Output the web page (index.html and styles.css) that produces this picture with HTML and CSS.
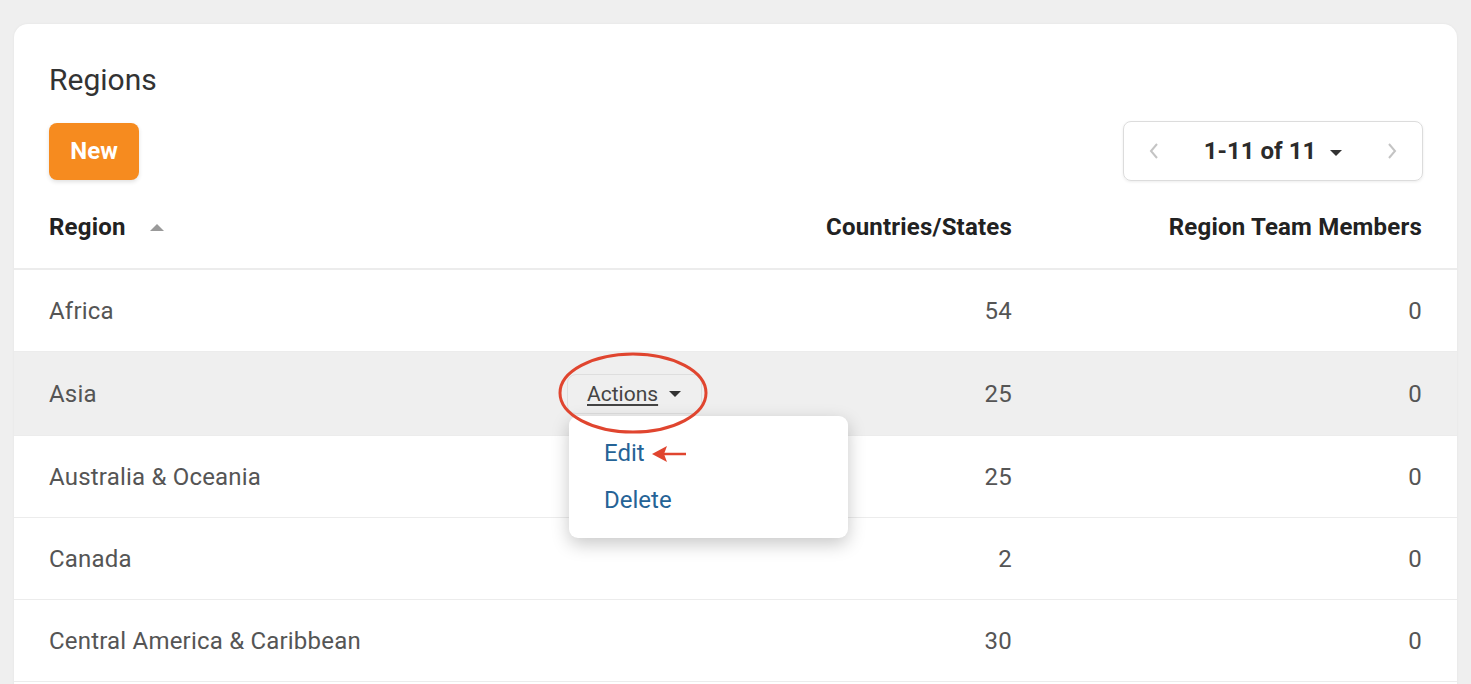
FILE: index.html
```html
<!DOCTYPE html>
<html><head>
  <meta charset="utf-8">
  <title>Regions</title>
  <link rel="stylesheet" href="styles.css">
</head>
<body>

<div class="card">
  <div class="head">
    <h1>Regions</h1>
    <div class="toolbar">
      <button class="btn-new">New</button>
      <div class="pager">
        <svg class="chev" width="14" height="20" viewBox="0 0 14 20"><path d="M10 3 L4 10 L10 17" fill="none" stroke="#c4c4c4" stroke-width="2"/></svg>
        <span class="range">1-11 of 11 <i class="caret"></i></span>
        <svg class="chev" width="14" height="20" viewBox="0 0 14 20"><path d="M4 3 L10 10 L4 17" fill="none" stroke="#c4c4c4" stroke-width="2"/></svg>
      </div>
    </div>
  </div>

  <div class="row th">
    <div class="c1">Region <i class="sort"></i></div>
    <div class="c2">Countries/States</div>
    <div class="c3">Region Team Members</div>
  </div>
  <div class="row">
    <div class="c1">Africa</div>
    <div class="c2">54</div>
    <div class="c3">0</div>
  </div>
  <div class="row hover">
    <div class="c1">Asia
      <div class="actions">
        <span class="act-btn"><u>Actions</u> <i class="caret"></i></span>
        <div class="menu">
          <a>Edit</a>
          <a>Delete</a>
        </div>
      </div>
    </div>
    <div class="c2">25</div>
    <div class="c3">0</div>
  </div>
  <div class="row">
    <div class="c1">Australia &amp; Oceania</div>
    <div class="c2">25</div>
    <div class="c3">0</div>
  </div>
  <div class="row">
    <div class="c1">Canada</div>
    <div class="c2">2</div>
    <div class="c3">0</div>
  </div>
  <div class="row">
    <div class="c1">Central America &amp; Caribbean</div>
    <div class="c2">30</div>
    <div class="c3">0</div>
  </div>
</div>

<!-- annotation marks -->
<svg class="marks" width="1471" height="684" viewBox="0 0 1471 684">
  <ellipse cx="633" cy="393" rx="73" ry="39" fill="none" stroke="#e0452f" stroke-width="3"/>
  <path d="M686 454 L662 454" stroke="#e0452f" stroke-width="2.5"/>
  <path d="M652 454 L667 446 L664 454 L667 462 Z" fill="#e0452f"/>
</svg>

</body></html>
```

FILE: styles.css
```css
body,html { margin:0; padding:0; background:#efefef; font-family: Roboto, "Liberation Sans", sans-serif; }

.card {
  margin: 24px 14px 0;
  background: #fff;
  border-radius: 14px;
  box-shadow: 0 0 3px rgba(0,0,0,0.05);
  padding-bottom: 20px;
}

.head {
  padding: 40px 35px 0;
}
h1 {
  margin: 0;
  font-size: 30px;
  line-height: 32px;
  font-weight: 400;
  color: #333;
}
.toolbar {
  margin-top: 25px;
  height: 60px;
  display: flex;
  align-items: center;
  justify-content: space-between;
}
.btn-new {
  width: 90px;
  height: 57px;
  border: 0;
  border-radius: 8px;
  background: #f68b1f;
  color: #fff;
  font: 700 24px Roboto, sans-serif;
  box-shadow: 0 2px 4px rgba(0,0,0,0.12);
}
.pager {
  box-sizing: border-box;
  width: 300px;
  height: 60px;
  margin-right: -1px;
  border: 1px solid #dcdcdc;
  border-radius: 8px;
  box-shadow: 0 1px 3px rgba(0,0,0,0.08);
  display: flex;
  align-items: center;
  justify-content: space-between;
  padding: 0 23px 0 23px;
}
.range {
  font-size: 24px;
  font-weight: 700;
  color: #2b2b2b;
  margin-left: 0;
}
.caret {
  display: inline-block;
  width: 0;
  height: 0;
  border-left: 6px solid transparent;
  border-right: 6px solid transparent;
  border-top: 6px solid #333;
  vertical-align: middle;
  margin-left: 8px;
}

.row {
  display: grid;
  grid-template-columns: 1fr 300px 410px;
  align-items: center;
  height: 82px;
  box-sizing: border-box;
  padding: 0 35px;
  border-bottom: 1px solid #ececec;
  font-size: 24px;
  letter-spacing: 0.2px;
  color: #555;
}
.row.th {
  height: 89px;
  padding-top: 5px;
  border-bottom: 2px solid #ececec;
  font-weight: 700;
  color: #222;
}
.row.hover { background: #efefef; height: 84px; }
.c2, .c3 { text-align: right; }
.c1 {
  display: flex;
  align-items: center;
  justify-content: space-between;
}
.th .c1 { justify-content: flex-start; }
.sort {
  display: inline-block;
  width: 0;
  height: 0;
  border-left: 7px solid transparent;
  border-right: 7px solid transparent;
  border-bottom: 7px solid #9a9a9a;
  margin-left: 24px;
}

.actions {
  position: relative;
  margin-right: 10px;
  letter-spacing: 0;
}
.act-btn {
  display: flex;
  align-items: center;
  box-sizing: border-box;
  height: 40px;
  width: 135px;
  padding: 0 0 0 19px;
  border: 1px solid #dedede;
  border-radius: 9px;
  font-size: 21px;
  color: #444;
}
.act-btn u { text-underline-offset: 3px; }
.act-btn .caret { margin-left: 11px; border-top-color: #333; }
.menu {
  position: absolute;
  top: 42px;
  left: 2px;
  width: 279px;
  height: 122px;
  box-sizing: border-box;
  background: #fff;
  border-radius: 9px;
  box-shadow: 0 6px 18px rgba(0,0,0,0.22);
  padding: 14px 35px 0;
  z-index: 2;
}
.menu a {
  display: block;
  font-size: 24px;
  line-height: 47px;
  color: #256396;
}

.marks {
  position: absolute;
  left: 0;
  top: 0;
  pointer-events: none;
  z-index: 3;
}
```
